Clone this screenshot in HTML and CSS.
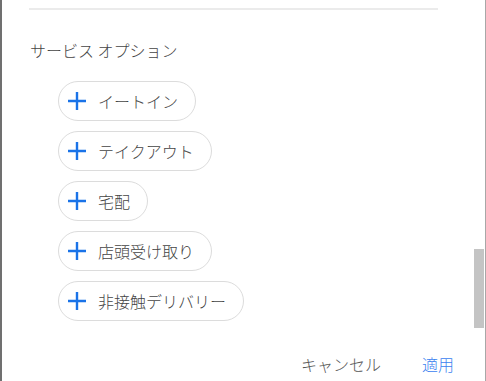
FILE: index.html
```html
<!DOCTYPE html>
<html lang="ja">
<head>
<meta charset="utf-8">
<link rel="stylesheet" href="styles.css">
</head>
<body>
<div class="panel">
  <div class="divider"></div>
  <div class="title">サービス オプション</div>
  <div class="chips">
    <div class="chip"><svg class="plus" viewBox="0 0 20 20"><path d="M10 1v18M1 10h18"/></svg><span>イートイン</span></div>
    <div class="chip"><svg class="plus" viewBox="0 0 20 20"><path d="M10 1v18M1 10h18"/></svg><span>テイクアウト</span></div>
    <div class="chip"><svg class="plus" viewBox="0 0 20 20"><path d="M10 1v18M1 10h18"/></svg><span>宅配</span></div>
    <div class="chip"><svg class="plus" viewBox="0 0 20 20"><path d="M10 1v18M1 10h18"/></svg><span>店頭受け取り</span></div>
    <div class="chip"><svg class="plus" viewBox="0 0 20 20"><path d="M10 1v18M1 10h18"/></svg><span>非接触デリバリー</span></div>
  </div>
  <div class="footer">
    <span class="btn cancel">キャンセル</span>
    <span class="btn apply">適用</span>
  </div>
  <div class="scrollbar"></div>
</div>
</body>
</html>
```
FILE: styles.css
```css
html, body {
  margin: 0;
  padding: 0;
  background: #fff;
}
body {
  font-family: "Noto Sans CJK JP", "Noto Sans", sans-serif;
}
.panel {
  position: relative;
  box-sizing: border-box;
  width: 486px;
  height: 381px;
  border-left: 2px solid #707070;
  border-right: 1px solid #a8a8a8;
  padding-top: 8px;
  display: flex;
  flex-direction: column;
}
.divider {
  margin-left: 27px;
  width: 409px;
  height: 2px;
  background: #ebebeb;
}
.title {
  margin-top: 28px;
  margin-left: 28px;
  font-size: 16px;
  line-height: 24px;
  color: #444;
  font-weight: 300;
}
.chips {
  margin-top: 19px;
  margin-left: 56px;
  display: flex;
  flex-direction: column;
  align-items: flex-start;
  gap: 10px;
}
.chip {
  box-sizing: border-box;
  height: 40px;
  border: 1px solid #dcdcdc;
  border-radius: 20px;
  display: flex;
  align-items: center;
  padding: 0 17px 0 8px;
  font-size: 16px;
  color: #444;
  font-weight: 300;
}
.plus {
  width: 20px;
  height: 20px;
  margin-right: 11px;
}
.plus path {
  stroke: #1a73e8;
  stroke-width: 2.4;
  fill: none;
}
.footer {
  margin-top: auto;
  display: flex;
  justify-content: flex-end;
  gap: 41px;
  padding: 0 31px 5px 0;
  font-size: 16px;
  line-height: 24px;
  font-weight: 300;
}
.cancel {
  color: #555;
}
.apply {
  color: #3b82f0;
}
.scrollbar {
  position: absolute;
  right: 1px;
  top: 249px;
  width: 10px;
  height: 79px;
  background: #c4c4c4;
}
```
